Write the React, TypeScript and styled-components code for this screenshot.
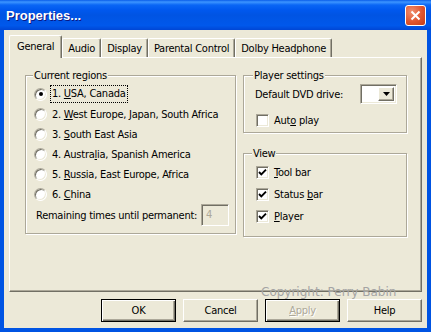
import styled, { createGlobalStyle } from "styled-components";

const GlobalStyle = createGlobalStyle`
  html, body {
    margin: 0;
    padding: 0;
  }
  body {
    background: #0054e3;
    font-family: "DejaVu Sans Condensed", "DejaVu Sans", sans-serif;
    font-stretch: condensed;
    font-size: 11px;
    letter-spacing: -0.25px;
    color: #000;
  }
`;

const Window = styled.div`
  width: 431px;
  height: 332px;
  display: flex;
  flex-direction: column;
`;

const TitleBar = styled.div`
  height: 30px;
  flex: none;
  display: flex;
  align-items: center;
  justify-content: space-between;
  padding: 0 5px 0 6px;
  background: linear-gradient(
    to bottom,
    #0a5de9 0,
    #3d95ff 2px,
    #0a66f5 5px,
    #0058ee 10px,
    #0054e3 50%,
    #0058eb 85%,
    #0046d5 100%
  );
`;

const Title = styled.span`
  color: #fff;
  font-family: "Liberation Sans", Arial, sans-serif;
  font-stretch: normal;
  letter-spacing: 0;
  font-weight: bold;
  font-size: 13px;
  text-shadow: 1px 1px #0a1883;
`;

const CloseButton = styled.div`
  width: 21px;
  height: 21px;
  box-sizing: border-box;
  border: 1px solid #fff;
  border-radius: 3px;
  background: radial-gradient(circle at 30% 30%, #f08f6f 0, #e0552f 55%, #c43c14 100%);
  display: flex;
  align-items: center;
  justify-content: center;
`;

const Frame = styled.div`
  flex: 1;
  display: flex;
  flex-direction: column;
  background: #ece9d8;
  border: 4px solid #0054e3;
  border-top: 0;
  padding: 5px 5px 6px;
`;

const TabStrip = styled.div`
  height: 22px;
  display: flex;
  align-items: flex-end;
`;

const Tab = styled.div<{ $active?: boolean }>`
  box-sizing: border-box;
  height: ${(p) => (p.$active ? "23px" : "19px")};
  margin-bottom: ${(p) => (p.$active ? "-1px" : "0")};
  position: relative;
  z-index: ${(p) => (p.$active ? 1 : 0)};
  padding: ${(p) => (p.$active ? "0 7px 2px" : "1px 5px 0")};
  display: flex;
  align-items: center;
  white-space: nowrap;
  background: #ece9d8;
  border: 1px solid;
  border-bottom: 0;
  border-color: #fff #716f64 #716f64 #fff;
  border-radius: 2px 2px 0 0;
  box-shadow: inset -1px 0 #aca899;
`;

const Panel = styled.div`
  box-sizing: border-box;
  height: 235px;
  display: flex;
  align-items: flex-start;
  gap: 7px;
  padding: 11px 14px 0 15px;
  border: 1px solid;
  border-color: #fff #716f64 #716f64 #fff;
  box-shadow: inset -1px -1px #aca899;
`;

const Group = styled.fieldset<{ $w?: number; $h: number }>`
  box-sizing: border-box;
  margin: 0;
  width: ${(p) => (p.$w ? `${p.$w}px` : "auto")};
  height: ${(p) => p.$h}px;
  border: 1px solid #aca899;
  box-shadow: inset 1px 1px #fff, 1px 1px #fff;
  min-width: 0;
`;

const Legend = styled.legend<{ $ml: number }>`
  padding: 0 1px;
  margin-left: ${(p) => p.$ml}px;
  line-height: 13px;
  background: #ece9d8;
`;

const RegionsGroup = styled(Group)`
  padding: 2px 6px 0 8px;
`;

const RadioRow = styled.div`
  height: 20px;
  display: flex;
  align-items: center;
  gap: 5px;
  white-space: nowrap;
`;

const RadioCircle = styled.span<{ $checked?: boolean }>`
  flex: none;
  width: 13px;
  height: 13px;
  box-sizing: border-box;
  border-radius: 50%;
  background: #fff;
  border: 1px solid;
  border-color: #aca899 #fff #fff #aca899;
  box-shadow: inset 1px 1px #716f64, inset -1px -1px #ece9d8;
  display: flex;
  align-items: center;
  justify-content: center;
  &::after {
    content: "";
    width: 4px;
    height: 4px;
    border-radius: 50%;
    background: ${(p) => (p.$checked ? "#000" : "transparent")};
  }
`;

const Focus = styled.span`
  border: 1px dotted #000;
  padding: 1px 1px 2px 1px;
  margin-left: -2px;
`;

const Key = styled.u`
  text-decoration: underline;
  text-underline-offset: 1px;
`;

const RemainingRow = styled.div`
  height: 22px;
  display: flex;
  align-items: center;
  justify-content: space-between;
  padding-left: 2px;
  white-space: nowrap;
`;

const DisabledInput = styled.div`
  box-sizing: border-box;
  flex: none;
  width: 28px;
  height: 22px;
  padding: 3px 0 0 4px;
  color: #aca899;
  background: #ece9d8;
  border: 1px solid;
  border-color: #aca899 #fff #fff #aca899;
  box-shadow: inset 1px 1px #716f64, inset -1px -1px #ece9d8;
`;

const RightColumn = styled.div`
  width: 164px;
  display: flex;
  flex-direction: column;
  gap: 14px;
`;

const PlayerGroup = styled(Group)`
  padding: 2px 9px 0 11px;
`;

const ComboRow = styled.div`
  height: 20px;
  display: flex;
  align-items: center;
  justify-content: space-between;
  white-space: nowrap;
`;

const Combo = styled.div`
  box-sizing: border-box;
  width: 37px;
  height: 20px;
  display: flex;
  justify-content: flex-end;
  padding: 2px;
  background: #fff;
  border: 1px solid;
  border-color: #aca899 #fff #fff #aca899;
  box-shadow: inset 1px 1px #716f64, inset -1px -1px #ece9d8;
`;

const ComboButton = styled.div`
  box-sizing: border-box;
  width: 16px;
  height: 100%;
  display: flex;
  align-items: center;
  justify-content: center;
  background: #ece9d8;
  border: 1px solid;
  border-color: #fff #716f64 #716f64 #fff;
  box-shadow: inset -1px -1px #aca899;
`;

const CheckRow = styled.div<{ $h: number; $mt?: number }>`
  height: ${(p) => p.$h}px;
  margin-top: ${(p) => p.$mt ?? 0}px;
  display: flex;
  align-items: center;
  gap: 5px;
`;

const CheckBox = styled.span<{ $ml?: number }>`
  flex: none;
  width: 13px;
  height: 13px;
  margin-left: ${(p) => p.$ml ?? 0}px;
  box-sizing: border-box;
  background: #fff;
  border: 1px solid;
  border-color: #aca899 #fff #fff #aca899;
  box-shadow: inset 1px 1px #716f64, inset -1px -1px #ece9d8;
  display: flex;
  align-items: center;
  justify-content: center;
`;

const ViewGroup = styled(Group)`
  padding: 1px 9px 0 12px;
`;

const ButtonRow = styled.div`
  position: relative;
  margin-top: 7px;
  height: 23px;
  display: flex;
  justify-content: flex-end;
  gap: 7px;
`;

const Button = styled.div<{ $default?: boolean; $disabled?: boolean }>`
  box-sizing: border-box;
  width: 75px;
  height: 23px;
  display: flex;
  align-items: center;
  justify-content: center;
  background: #ece9d8;
  color: ${(p) => (p.$disabled ? "#aca899" : "#000")};
  text-shadow: ${(p) => (p.$disabled ? "1px 1px #fff" : "none")};
  border: 1px solid;
  border-color: ${(p) => (p.$default ? "#000" : "#fff #716f64 #716f64 #fff")};
  box-shadow: ${(p) =>
    p.$default
      ? "inset 1px 1px #fff, inset -1px -1px #716f64, inset -2px -2px #aca899"
      : "inset -1px -1px #aca899"};
`;

const Copyright = styled.span`
  position: absolute;
  left: 252px;
  top: -14px;
  font-family: "DejaVu Sans", Verdana, sans-serif;
  font-stretch: normal;
  letter-spacing: 0;
  font-size: 12px;
  line-height: 15px;
  color: #a4a4a4;
  pointer-events: none;
`;

function Check() {
  return (
    <svg width="9" height="9" viewBox="0 0 9 9">
      <path d="M1 4 L3.3 6.4 L8 1.6" stroke="#000" strokeWidth="1.9" fill="none" />
    </svg>
  );
}

const regions = [
  { n: "2. ", k: "W", rest: "est Europe, Japan, South Africa" },
  { n: "3. ", k: "S", rest: "outh East Asia" },
  { n: "4. Austra", k: "l", rest: "ia, Spanish America" },
  { n: "5. ", k: "R", rest: "ussia, East Europe, Africa" },
  { n: "6. ", k: "C", rest: "hina" },
];

export default function App() {
  return (
    <Window>
      <GlobalStyle />
      <TitleBar>
        <Title>Properties...</Title>
        <CloseButton>
          <svg width="11" height="11" viewBox="0 0 11 11">
            <path d="M1.5 1.5 L9.5 9.5 M9.5 1.5 L1.5 9.5" stroke="#fff" strokeWidth="2" />
          </svg>
        </CloseButton>
      </TitleBar>
      <Frame>
        <TabStrip>
          <Tab $active>General</Tab>
          <Tab>Audio</Tab>
          <Tab>Display</Tab>
          <Tab>Parental Control</Tab>
          <Tab>Dolby Headphone</Tab>
        </TabStrip>
        <Panel>
          <RegionsGroup $w={211} $h={165}>
            <Legend $ml={-1}>Current regions</Legend>
            <RadioRow>
              <RadioCircle $checked />
              <Focus>
                1. <Key>U</Key>SA, Canada
              </Focus>
            </RadioRow>
            {regions.map((r) => (
              <RadioRow key={r.n + r.k}>
                <RadioCircle />
                <span>
                  {r.n}
                  <Key>{r.k}</Key>
                  {r.rest}
                </span>
              </RadioRow>
            ))}
            <RemainingRow>
              <span>Remaining times until permanent:</span>
              <DisabledInput>4</DisabledInput>
            </RemainingRow>
          </RegionsGroup>
          <RightColumn>
            <PlayerGroup $h={64}>
              <Legend $ml={-2}>Player settings</Legend>
              <ComboRow>
                <span>Default DVD drive:</span>
                <Combo>
                  <ComboButton>
                    <svg width="7" height="4" viewBox="0 0 7 4">
                      <path d="M0 0 H7 L3.5 4 Z" fill="#000" />
                    </svg>
                  </ComboButton>
                </Combo>
              </ComboRow>
              <CheckRow $h={16} $mt={8}>
                <CheckBox $ml={1} />
                <span>
                  Aut<Key>o</Key> play
                </span>
              </CheckRow>
            </PlayerGroup>
            <ViewGroup $h={90}>
              <Legend $ml={-4}>View</Legend>
              <CheckRow $h={22}>
                <CheckBox>
                  <Check />
                </CheckBox>
                <span>
                  <Key>T</Key>ool bar
                </span>
              </CheckRow>
              <CheckRow $h={22}>
                <CheckBox>
                  <Check />
                </CheckBox>
                <span>
                  Status <Key>b</Key>ar
                </span>
              </CheckRow>
              <CheckRow $h={22}>
                <CheckBox>
                  <Check />
                </CheckBox>
                <span>
                  <Key>P</Key>layer
                </span>
              </CheckRow>
            </ViewGroup>
          </RightColumn>
        </Panel>
        <ButtonRow>
          <Copyright>Copyright: Perry Babin</Copyright>
          <Button $default>OK</Button>
          <Button>Cancel</Button>
          <Button $default $disabled>
            <span>
              <Key>A</Key>pply
            </span>
          </Button>
          <Button>Help</Button>
        </ButtonRow>
      </Frame>
    </Window>
  );
}
